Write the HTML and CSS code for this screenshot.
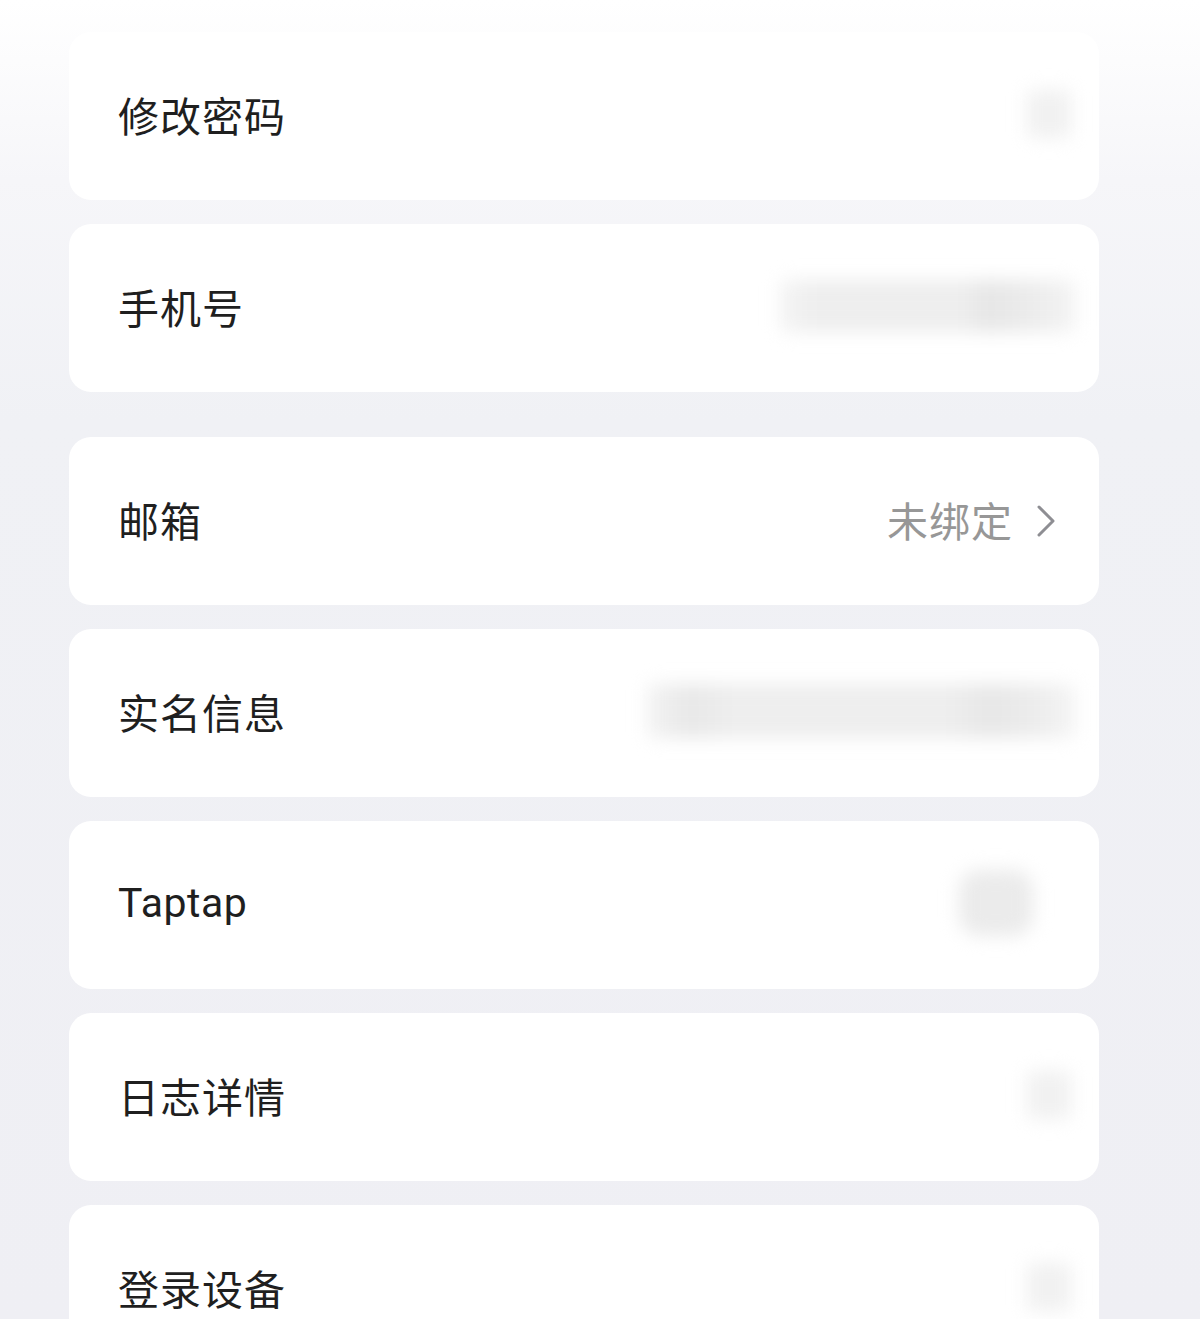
FILE: index.html
```html
<!DOCTYPE html>
<html>
<head>
    <meta charset="utf-8">
    <title>账号与安全</title>
    <link rel="stylesheet" href="styles.css">
</head>
<body>
    <div class="page">
        <div class="group">
            <div class="row">
                <span class="label">修改密码</span>
                <span class="masked masked-icon"></span>
            </div>
            <div class="row">
                <span class="label">手机号</span>
                <span class="masked masked-phone"></span>
            </div>
        </div>

        <div class="group">
            <div class="row">
                <span class="label">邮箱</span>
                <span class="value">未绑定</span>
                <svg class="chevron" viewBox="0 0 22 34" width="22" height="34">
                    <path d="M4 3 L18 17 L4 31" fill="none" stroke="#8e8e93" stroke-width="3" stroke-linecap="round" stroke-linejoin="round"/>
                </svg>
            </div>
            <div class="row">
                <span class="label">实名信息</span>
                <span class="masked masked-name"></span>
            </div>
            <div class="row">
                <span class="label latin">Taptap</span>
                <span class="masked masked-avatar"></span>
            </div>
            <div class="row">
                <span class="label">日志详情</span>
                <span class="masked masked-icon"></span>
            </div>
            <div class="row">
                <span class="label">登录设备</span>
                <span class="masked masked-icon"></span>
            </div>
        </div>
    </div>
</body>
</html>
```

FILE: styles.css
```css
body {
    margin: 0;
    font-family: "Noto Sans CJK SC", "Noto Sans", sans-serif;
    background: linear-gradient(to bottom, #ffffff 0px, #f6f6f9 180px, #f0f1f5 420px, #efeff4 100%);
    min-height: 1319px;
}

.page {
    width: 1030px;
    margin-left: 69px;
    padding-top: 32px;
    display: flex;
    flex-direction: column;
    gap: 45px;
    overflow: hidden;
    height: 1287px;
}

.group {
    display: flex;
    flex-direction: column;
    gap: 24px;
}

.row {
    height: 168px;
    flex-shrink: 0;
    box-sizing: border-box;
    background-color: #ffffff;
    border-radius: 22px;
    display: flex;
    align-items: center;
    padding: 0 24px 4px 49px;
}

.label {
    font-size: 41px;
    color: #1f1f1f;
    letter-spacing: 1px;
    flex: 1;
}

.latin {
    font-family: Roboto, "Noto Sans", sans-serif;
    font-size: 41px;
    letter-spacing: 0.5px;
}

.value {
    font-size: 41px;
    color: #979797;
    letter-spacing: 1px;
    margin-right: 22px;
}

.chevron {
    margin-right: 18px;
    margin-top: 4px;
}

.masked {
    display: block;
    background-color: #ececec;
    filter: blur(9px);
    border-radius: 6px;
}

.masked-icon {
    width: 44px;
    height: 48px;
    margin-right: 4px;
    background-color: #f1f1f1;
}

.masked-phone {
    width: 295px;
    height: 52px;
    background: linear-gradient(to right, #f4f4f4 0%, #eeeeee 12%, #eeeeee 62%, #e6e6e6 70%, #ececec 85%, #f3f3f3 100%);
}

.masked-name {
    width: 428px;
    height: 54px;
    background: linear-gradient(to right, #f3f3f3 0%, #e8e8e8 10%, #eeeeee 20%, #eeeeee 70%, #e7e7e7 80%, #ececec 90%, #f4f4f4 100%);
}

.masked-avatar {
    width: 74px;
    height: 66px;
    margin-right: 42px;
    background-color: #ebebeb;
    border-radius: 20px;
}
```
